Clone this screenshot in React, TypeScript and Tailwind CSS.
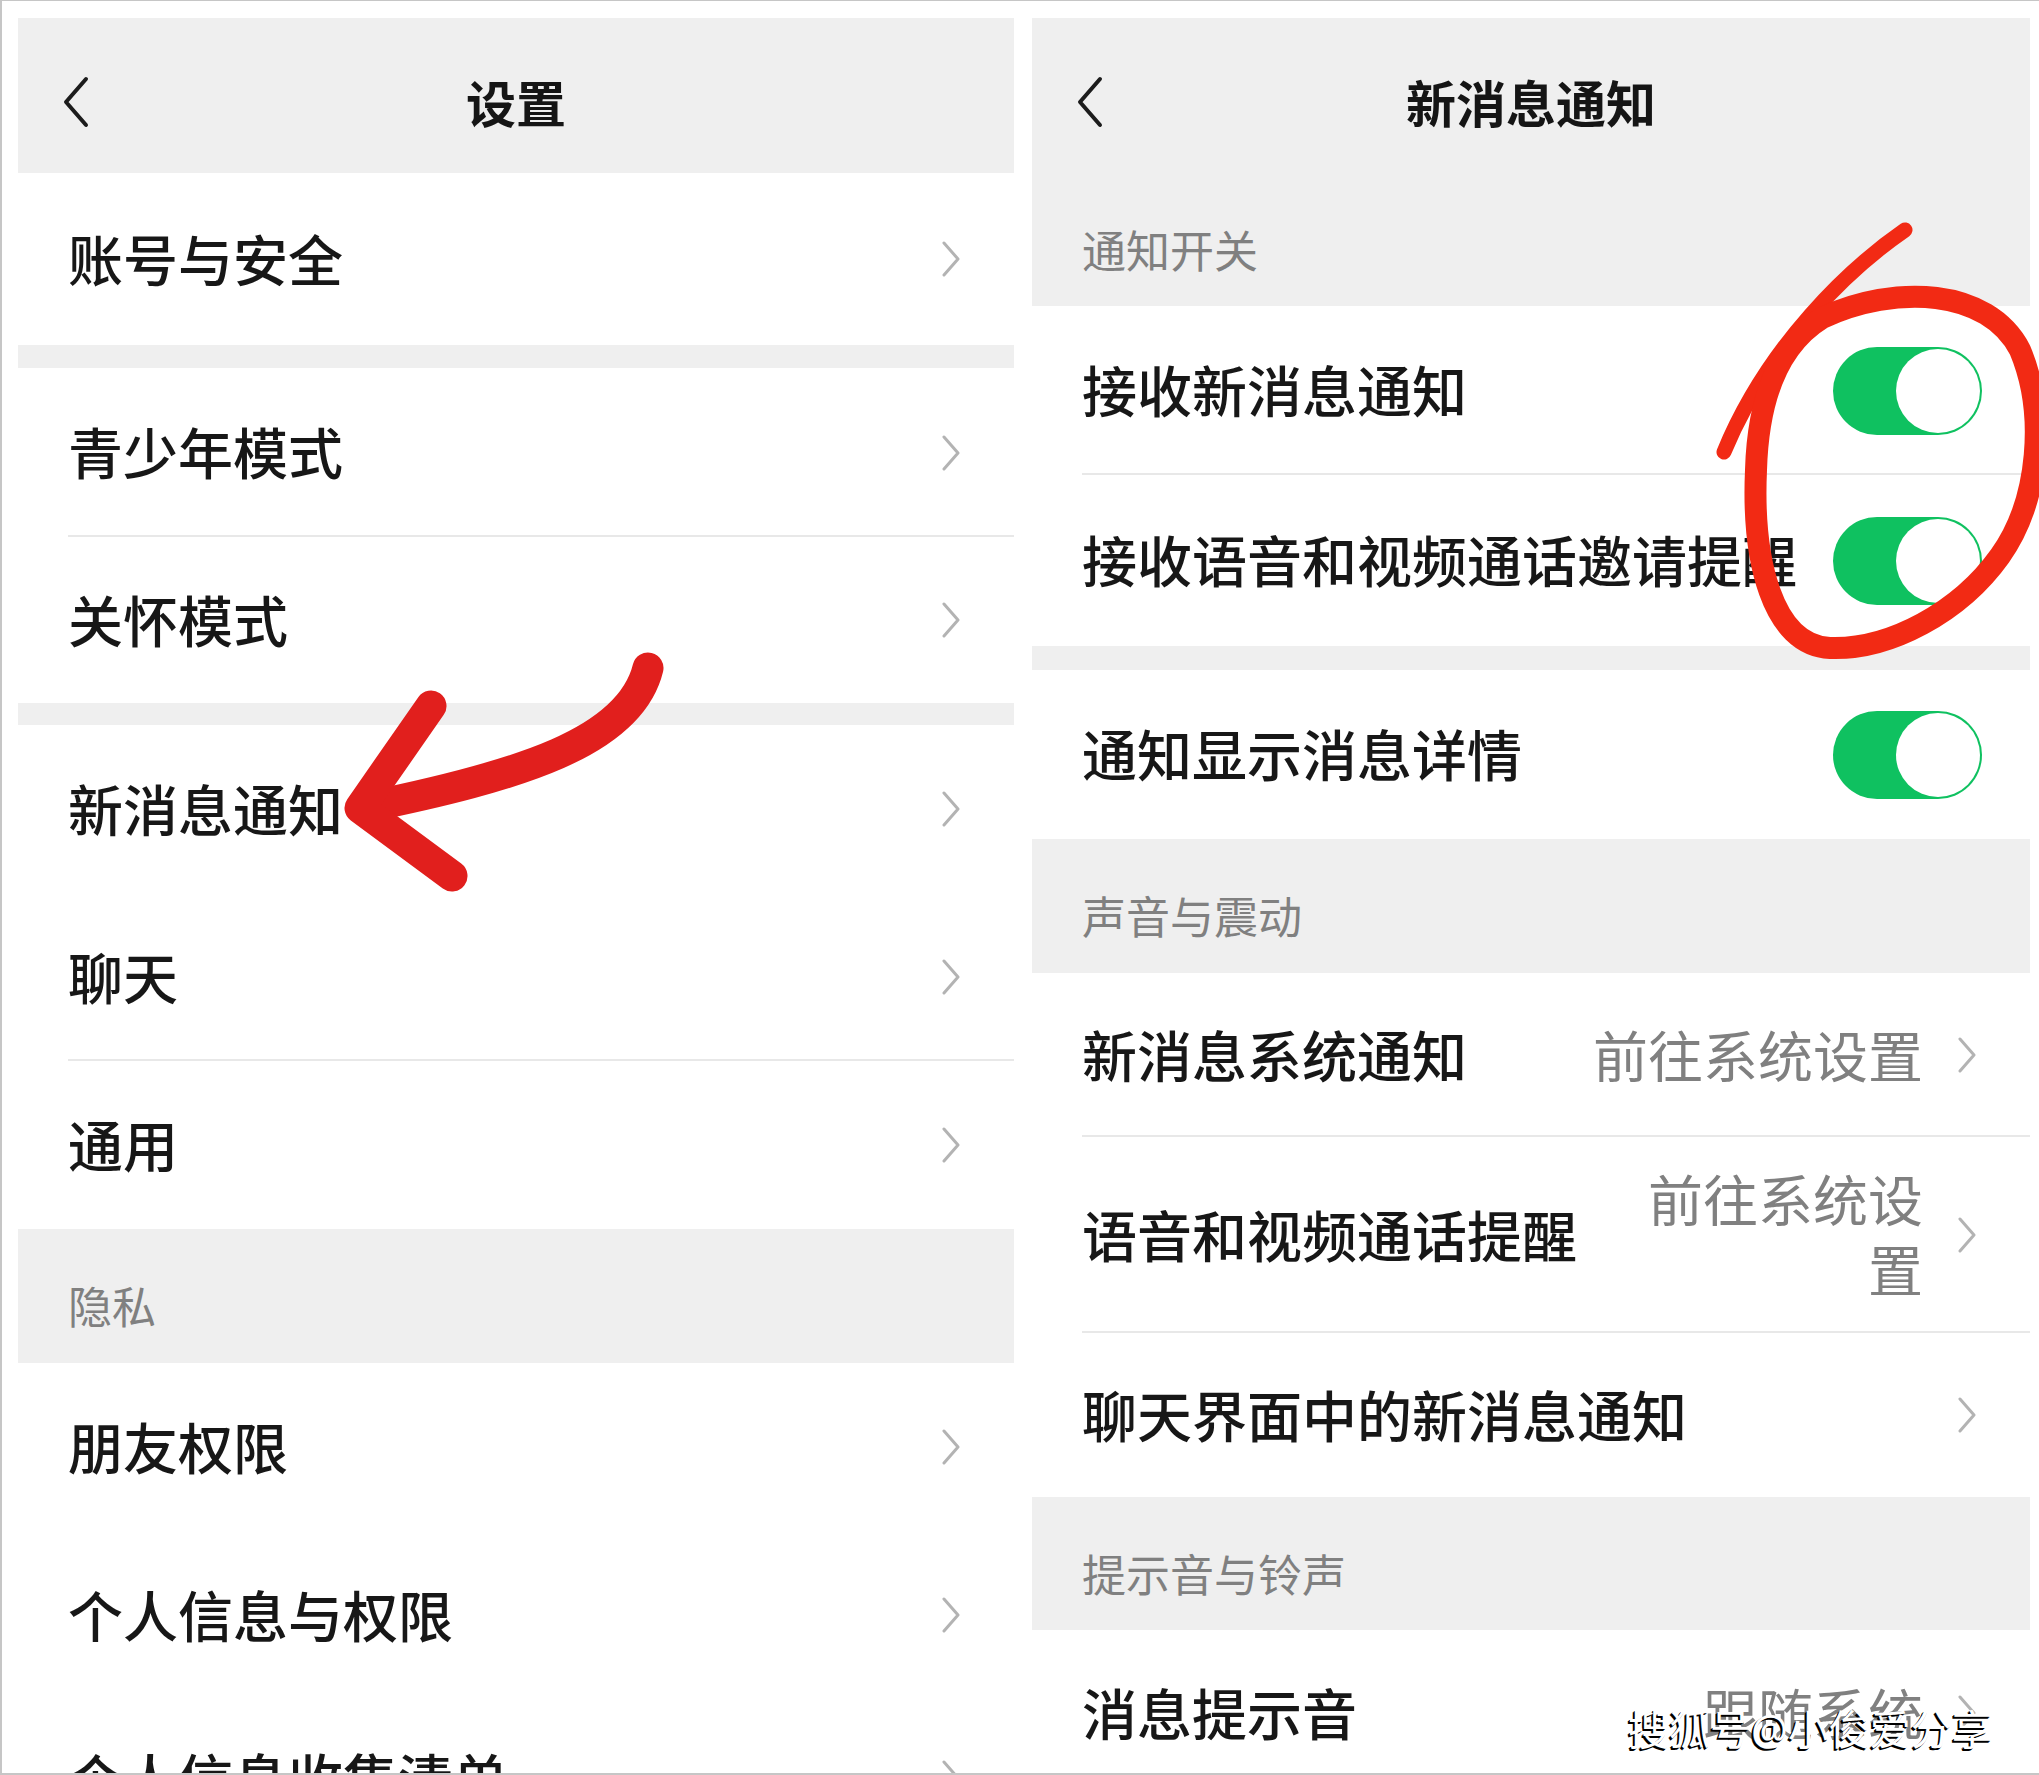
import React from "react";

const FONT = "font-['Noto_Sans','Noto_Sans_CJK_SC',sans-serif]";

function Chevron() {
  return (
    <svg width="20" height="36" viewBox="0 0 20 36" className="shrink-0">
      <path d="M3 2 L17 18 L3 34" fill="none" stroke="#b3b3b3" strokeWidth="3" strokeLinecap="round" strokeLinejoin="round" />
    </svg>
  );
}

function BackIcon() {
  return (
    <svg width="28" height="52" viewBox="0 0 28 52">
      <path d="M24 3 L4 26 L24 49" fill="none" stroke="#1c1c1c" strokeWidth="4" strokeLinecap="round" strokeLinejoin="round" />
    </svg>
  );
}

function Toggle() {
  return (
    <div className="w-[149px] h-[88px] rounded-full bg-[#0fc160] flex items-center justify-end p-[2px] shrink-0">
      <div className="w-[84px] h-[84px] rounded-full bg-white" />
    </div>
  );
}

function Header({ title }: { title: string }) {
  return (
    <div className="relative h-[155px] shrink-0 flex items-center justify-center pt-[16px] bg-[#efefef]">
      <div className="absolute left-[44px] top-[58px]">
        <BackIcon />
      </div>
      <span className="text-[50px] leading-none font-semibold text-[#151515]">{title}</span>
    </div>
  );
}

function SectionLabel({ label, h }: { label: string; h: string }) {
  return (
    <div className={`${h} shrink-0 bg-[#efefef] px-[50px] pt-[56px]`}>
      <span className="text-[44px] leading-none text-[#808080]">{label}</span>
    </div>
  );
}

function Band({ h }: { h: string }) {
  return <div className={`${h} shrink-0 bg-[#efefef]`} />;
}

function Row({
  label,
  h,
  divider,
  toggle,
  value,
  valueWide,
}: {
  label: string;
  h: string;
  divider?: boolean;
  toggle?: boolean;
  value?: string;
  valueWide?: boolean;
}) {
  return (
    <div
      className={`relative ${h} shrink-0 bg-white flex items-center pl-[50px] ${toggle ? "pr-[48px]" : "pr-[53px]"}`}
    >
      <span className="flex-1 text-[55px] leading-none font-medium text-[#171717] whitespace-nowrap">{label}</span>
      {toggle ? (
        <Toggle />
      ) : (
        <div className="flex items-center gap-[34px]">
          {value && (
            <span
              className={`text-[55px] text-right text-[#808080] ${
                valueWide ? "leading-none whitespace-nowrap" : "leading-[70px] max-w-[290px]"
              }`}
            >
              {value}
            </span>
          )}
          <Chevron />
        </div>
      )}
      {divider && <div className="absolute left-[50px] right-0 bottom-0 h-[2px] bg-[#e8e8e8]" />}
    </div>
  );
}

export default function App() {
  return (
    <div className={`relative w-[2039px] h-[1775px] overflow-hidden bg-white ${FONT}`}>
      <div className="h-full overflow-hidden border-t border-l-2 border-b-2 border-[#c6c6c6] pt-[17px] pl-[16px] flex items-start gap-[18px]">
        {/* settings list */}
        <div className="w-[996px] flex flex-col shrink-0">
          <Header title="设置" />
          <Row label="账号与安全" h="h-[172px]" />
          <Band h="h-[23px]" />
          <Row label="青少年模式" h="h-[169px]" divider />
          <Row label="关怀模式" h="h-[166px]" />
          <Band h="h-[22px]" />
          <Row label="新消息通知" h="h-[168px]" />
          <Row label="聊天" h="h-[168px]" divider />
          <Row label="通用" h="h-[168px]" />
          <SectionLabel label="隐私" h="h-[134px]" />
          <Row label="朋友权限" h="h-[168px]" />
          <Row label="个人信息与权限" h="h-[168px]" />
          <Row label="个人信息收集清单" h="h-[158px]" />
        </div>

        {/* notification settings */}
        <div className="w-[998px] flex flex-col shrink-0">
          <Header title="新消息通知" />
          <SectionLabel label="通知开关" h="h-[133px]" />
          <Row label="接收新消息通知" h="h-[169px]" toggle divider />
          <Row label="接收语音和视频通话邀请提醒" h="h-[171px]" toggle />
          <Band h="h-[24px]" />
          <Row label="通知显示消息详情" h="h-[169px]" toggle />
          <SectionLabel label="声音与震动" h="h-[134px]" />
          <Row label="新消息系统通知" h="h-[164px]" value="前往系统设置" valueWide divider />
          <Row label="语音和视频通话提醒" h="h-[196px]" value="前往系统设置" divider />
          <Row label="聊天界面中的新消息通知" h="h-[164px]" />
          <SectionLabel label="提示音与铃声" h="h-[133px]" />
          <Row label="消息提示音" h="h-[166px]" value="跟随系统" valueWide />
        </div>
      </div>

      {/* red marker annotations */}
      <svg
        className="absolute left-0 top-0 pointer-events-none"
        width="2039"
        height="1775"
        viewBox="0 0 2039 1775"
      >
        <g fill="none" stroke="#e11f1d" strokeLinecap="round" strokeLinejoin="round">
          <path d="M648 668 C630 742, 520 776, 362 808" strokeWidth="31" />
          <path d="M431 706 L360 808 L452 876" strokeWidth="31" />
        </g>
        <g fill="none" stroke="#f22a14" strokeLinecap="round" strokeLinejoin="round">
          <path d="M1905 230 C1850 268, 1768 345, 1724 452" strokeWidth="15" />
          <path
            d="M1822 318 C1895 284, 1988 288, 2020 350 C2046 412, 2040 500, 2000 556 C1960 612, 1890 650, 1830 648 C1772 645, 1752 560, 1756 470 C1758 400, 1778 345, 1822 318"
            strokeWidth="22"
          />
        </g>
      </svg>

      <span className="absolute left-[1628px] top-[1709px] text-[41px] leading-none text-white whitespace-nowrap [text-shadow:-2px_2px_0_#000,-1px_1px_0_#000]">
        搜狐号@小俊爱分享
      </span>
    </div>
  );
}
